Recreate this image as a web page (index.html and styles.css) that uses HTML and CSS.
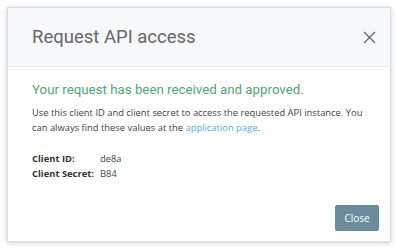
FILE: index.html
```html
<!DOCTYPE html>
<html lang="en">
<head>
    <meta charset="UTF-8">
    <title>Request API access</title>
    <link rel="stylesheet" href="styles.css">
</head>
<body>
    <div class="modal">
        <div class="modal-header">
            <div class="modal-title">Request API access</div>
            <button class="modal-close" aria-label="Close">
                <svg width="13" height="13" viewBox="0 0 13 13"><path d="M1 1L12 12M12 1L1 12" stroke="#666" stroke-width="1.3" fill="none"/></svg>
            </button>
        </div>
        <div class="modal-body">
            <div class="success">Your request has been received and approved.</div>
            <p class="modal-text">Use this client ID and client secret to access the requested API instance. You can always find these values at the <a href="#">application page</a>.</p>
            <div class="creds">
                <div class="cred-row">
                    <span class="cred-label">Client ID:</span>
                    <span class="cred-value">de8a</span>
                </div>
                <div class="cred-row">
                    <span class="cred-label">Client Secret:</span>
                    <span class="cred-value">B84</span>
                </div>
            </div>
        </div>
        <div class="modal-footer">
            <button class="modal-button">Close</button>
        </div>
    </div>
</body>
</html>
```

FILE: styles.css
```css
* {
    margin: 0;
    padding: 0;
    box-sizing: border-box;
}

body {
    font-family: 'Open Sans', sans-serif;
    background: #fff;
    width: 398px;
    height: 250px;
    padding: 7px;
}

.modal {
    width: 384px;
    height: 235px;
    border: 1px solid #dcdcdc;
    box-shadow: 0 1px 5px rgba(0,0,0,0.2);
    background: #fff;
    display: flex;
    flex-direction: column;
}

.modal-header {
    height: 59px;
    background: #f6f8fa;
    border-bottom: 1px solid #e8ebee;
    display: flex;
    align-items: center;
    justify-content: space-between;
    padding: 0 14px 0 24px;
}

.modal-title {
    font-family: 'Roboto', sans-serif;
    font-size: 18.5px;
    color: #666;
}

.modal-close {
    border: none;
    background: none;
    display: flex;
}

.modal-body {
    flex: 1;
    padding: 15px 24px 0;
}

.success {
    font-family: 'Roboto', sans-serif;
    font-size: 13.3px;
    color: #4ea86f;
    margin-bottom: 8px;
}

.modal-text {
    font-size: 9.4px;
    line-height: 15px;
    color: #444;
    margin-bottom: 16px;
}

.modal-text a {
    color: #4fb0e0;
    text-decoration: none;
}

.cred-row {
    display: flex;
    font-size: 9.4px;
    line-height: 15px;
    color: #444;
}

.cred-label {
    font-weight: bold;
    color: #333;
    width: 68px;
    white-space: nowrap;
}

.modal-footer {
    display: flex;
    justify-content: flex-end;
    padding: 0 11px 10px;
}

.modal-button {
    width: 44px;
    height: 26px;
    background: #6b8c9c;
    color: #fff;
    border: none;
    border-radius: 2px;
    font-family: 'Open Sans', sans-serif;
    font-size: 10px;
}
```
